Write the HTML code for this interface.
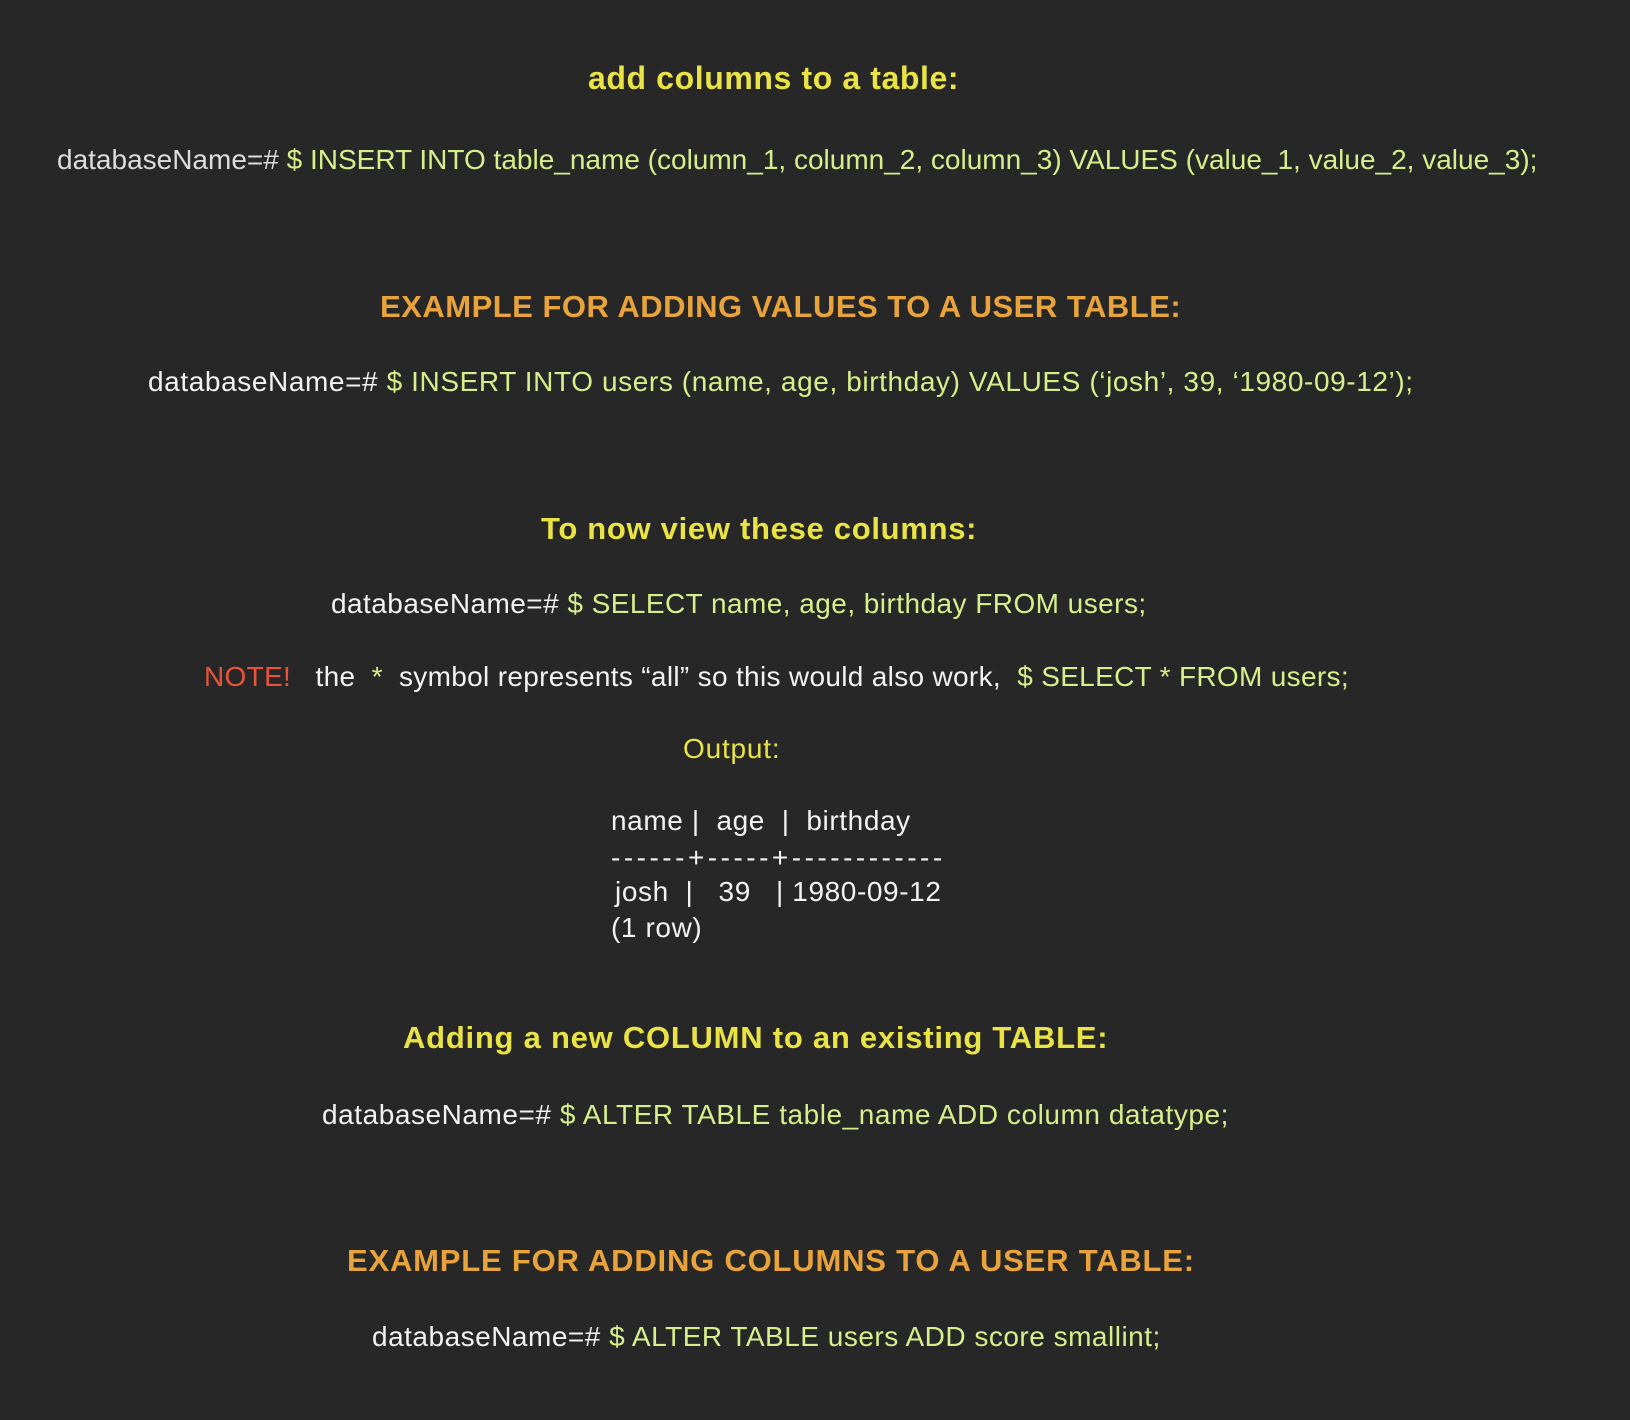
<!DOCTYPE html>
<html><head><meta charset="utf-8"><style>
html,body{margin:0;padding:0}
body{width:1630px;height:1420px;background:#272727;position:relative;overflow:hidden;font-family:"Liberation Sans",sans-serif;}
.t{position:absolute;white-space:nowrap;font-size:28px;line-height:30px;color:#f2f2f2}
.h{font-weight:bold;font-size:31px;color:#e9e346;letter-spacing:0.5px}
.o{color:#e9a33c}
.g{color:#d6ef8c}
.p{color:#dcdcdc}
.r{color:#e8533a}
.y{color:#e9e346}
</style></head><body>
<div class="t h" style="left:588px;top:63px;font-size:32px;letter-spacing:0.6px">add columns to a table:</div>
<div class="t" style="left:57px;top:145px"><span class="p">databaseName=#</span> <span class="g">$ INSERT INTO table_name (column_1, column_2, column_3) VALUES (value_1, value_2, value_3);</span></div>
<div class="t h o" style="left:380px;top:292px">EXAMPLE FOR ADDING VALUES TO A USER TABLE:</div>
<div class="t" style="left:148px;top:367px;letter-spacing:0.6px">databaseName=# <span class="g">$ INSERT INTO users (name, age, birthday) VALUES (‘josh’, 39, ‘1980-09-12’);</span></div>
<div class="t h" style="left:541px;top:514px;letter-spacing:0.7px">To now view these columns:</div>
<div class="t" style="left:331px;top:589px;letter-spacing:0.45px">databaseName=# <span class="g">$ SELECT name, age, birthday FROM users;</span></div>
<div class="t" style="left:204px;top:662px;letter-spacing:0.32px"><span class="r">NOTE!</span>&nbsp;&nbsp; the&nbsp; <span class="g">*</span>&nbsp; symbol represents “all” so this would also work,&nbsp; <span class="g">$ SELECT * FROM users;</span></div>
<div class="t y" style="left:683px;top:734px;letter-spacing:0.8px">Output:</div>
<div class="t" style="left:611px;top:806px;letter-spacing:0.6px">name |&nbsp; age&nbsp; |&nbsp; birthday</div>
<div class="t" style="left:611px;top:843px;letter-spacing:3.5px">------+-----+------------</div>
<div class="t" style="left:615px;top:877px;letter-spacing:0.6px">josh&nbsp; |&nbsp;&nbsp; 39&nbsp;&nbsp; | 1980-09-12</div>
<div class="t" style="left:611px;top:913px;letter-spacing:0.6px">(1 row)</div>
<div class="t h" style="left:403px;top:1023px;letter-spacing:0.75px">Adding a new COLUMN to an existing TABLE:</div>
<div class="t" style="left:322px;top:1100px;letter-spacing:0.55px">databaseName=# <span class="g">$ ALTER TABLE table_name ADD column datatype;</span></div>
<div class="t h o" style="left:347px;top:1246px;letter-spacing:0.8px">EXAMPLE FOR ADDING COLUMNS TO A USER TABLE:</div>
<div class="t" style="left:372px;top:1322px;letter-spacing:0.5px">databaseName=# <span class="g">$ ALTER TABLE users ADD score smallint;</span></div>
</body></html>
